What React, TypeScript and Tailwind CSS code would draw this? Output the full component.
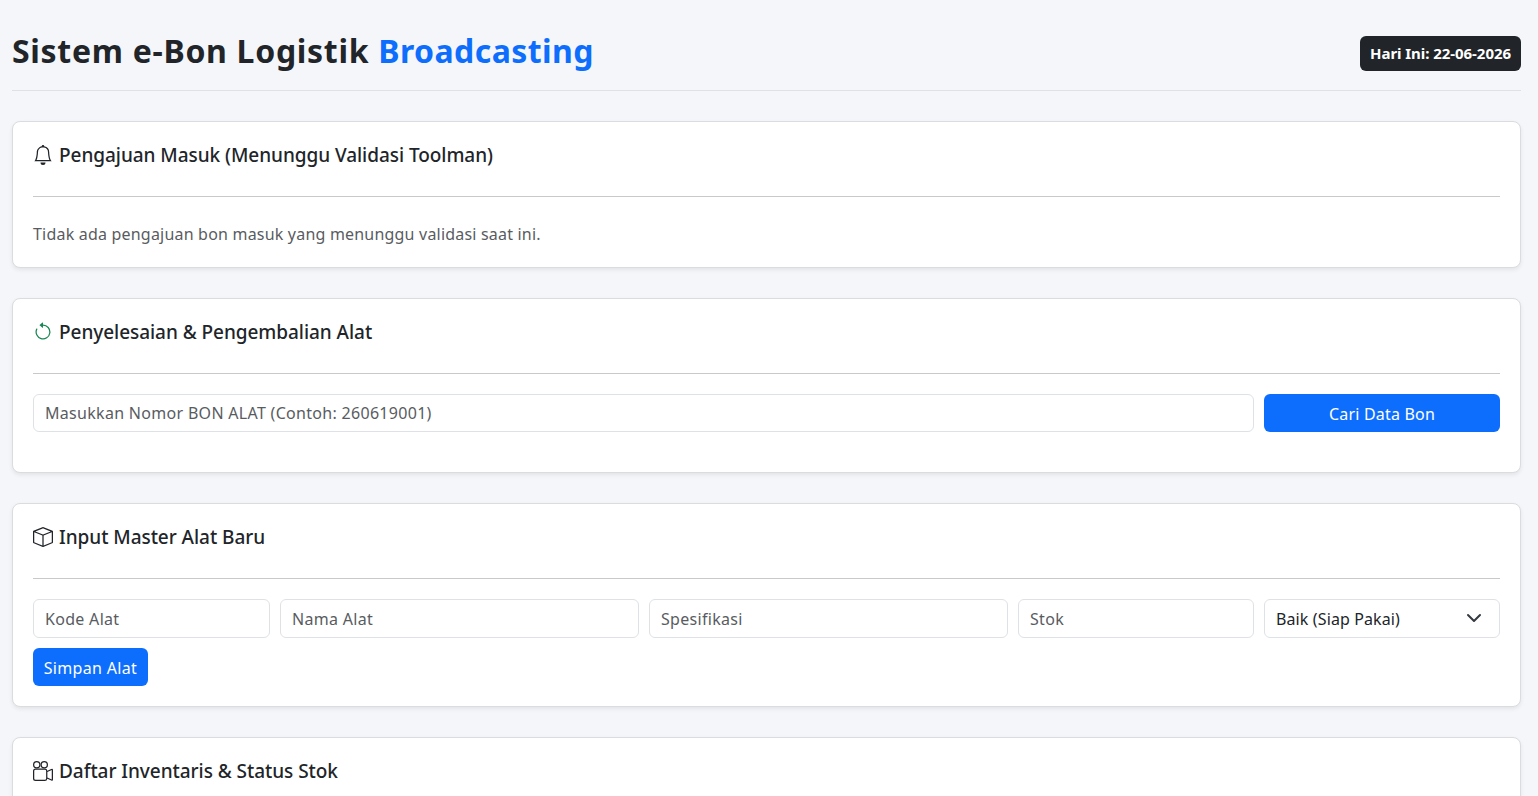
import type { ReactNode } from 'react';
import { BsArrowCounterclockwise, BsBell, BsBox, BsCameraReels } from 'react-icons/bs';

const fieldClass =
  'w-full px-[11px] bg-white border border-[#dee2e6] rounded-[6px] text-[16px] text-[#212529] placeholder:text-[#595c5f] outline-none tracking-[0.3px]';

const Card = ({ icon, title, children }: { icon: ReactNode; title: string; children?: ReactNode }) => {
  return (
    <section className="bg-white border border-[#dadcdf] rounded-[8px] shadow-[0_2px_4px_rgba(0,0,0,0.075)] p-[20px] mb-[30px]">
      <div className="h-[54px]">
        <h5 className="flex items-center gap-[6px] h-[26px] text-[19px] leading-[24px] font-medium tracking-[-0.05px] text-[#212529]">
          {icon}
          {title}
        </h5>
      </div>
      <hr className="border-0 border-t border-[#c8c9ca]" />
      {children}
    </section>
  );
};

export default function App() {
  return (
    <div
      className="h-screen overflow-hidden bg-[#f4f6f9] pl-[12px] pr-[17px] pt-[24px] text-[#212529]"
      style={{ fontFamily: '"Noto Sans", sans-serif' }}
    >
      <header className="flex items-center justify-between h-[67px] border-b border-[#dee2e6] mb-[30px] pb-[8px]">
        <h2 className="text-[32px] leading-[38px] font-bold tracking-[0.7px] mb-[4px]">
          Sistem e-Bon Logistik <span className="text-[#0d6efd] tracking-[0.42px]">Broadcasting</span>
        </h2>
        <span className="bg-[#212529] text-white text-[15px] leading-[19px] font-bold rounded-[6px] px-[10px] py-[8px] tracking-[-0.05px]">
          Hari Ini: 22-06-2026
        </span>
      </header>

      <Card icon={<BsBell className="text-[20px]" />} title="Pengajuan Masuk (Menunggu Validasi Toolman)">
        <p className="mt-[25px] h-[25px] text-[16px] leading-[24px] text-[#595c5f] tracking-[0.2px]">
          Tidak ada pengajuan bon masuk yang menunggu validasi saat ini.
        </p>
      </Card>

      <Card
        icon={<BsArrowCounterclockwise className="text-[20px] text-[#198754]" />}
        title="Penyelesaian & Pengembalian Alat"
      >
        <div className="flex gap-[10px] mt-[20px] mb-[20px]">
          <input className={`${fieldClass} h-[38px] flex-1`} placeholder="Masukkan Nomor BON ALAT (Contoh: 260619001)" />
          <button className="w-[236px] h-[38px] pt-[1px] bg-[#0d6efd] text-white text-[16px] rounded-[6px] tracking-[0.2px]">Cari Data Bon</button>
        </div>
      </Card>

      <Card icon={<BsBox className="text-[20px]" />} title="Input Master Alat Baru">
        <div className="grid grid-cols-[237px_359px_359px_236px_236px] gap-[10px] mt-[20px]">
          <input className={`${fieldClass} h-[39px]`} placeholder="Kode Alat" />
          <input className={`${fieldClass} h-[39px]`} placeholder="Nama Alat" />
          <input className={`${fieldClass} h-[39px]`} placeholder="Spesifikasi" />
          <input className={`${fieldClass} h-[39px]`} placeholder="Stok" />
          <div className="relative">
            <select className={`${fieldClass} h-[39px] appearance-none tracking-[0.12px]`} defaultValue="Baik (Siap Pakai)">
              <option>Baik (Siap Pakai)</option>
              <option>Rusak</option>
            </select>
            <svg className="absolute right-[18px] top-[11px] w-[16px] h-[16px] pointer-events-none" viewBox="0 0 16 16" fill="none">
              <path d="m2 5 6 6 6-6" stroke="#343a40" strokeWidth="2" strokeLinecap="round" strokeLinejoin="round" />
            </svg>
          </div>
          <div className="col-span-5">
            <button className="h-[38px] w-[115px] pt-[1px] bg-[#0d6efd] text-white text-[16px] rounded-[6px] tracking-[0.33px]">Simpan Alat</button>
          </div>
        </div>
      </Card>

      <Card icon={<BsCameraReels className="text-[20px]" />} title="Daftar Inventaris & Status Stok" />
    </div>
  );
}
